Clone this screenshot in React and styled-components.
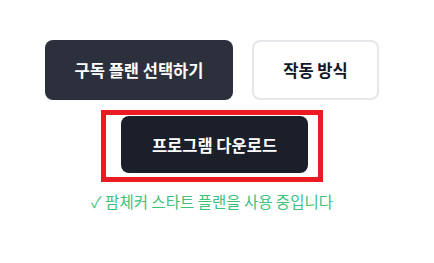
import React from "react";
import styled, { createGlobalStyle } from "styled-components";

const GlobalStyle = createGlobalStyle`
    body {
        margin: 0;
        background: #fff;
        font-family: "Noto Sans CJK KR", "Noto Sans", sans-serif;
    }
`;

function App() {
    return (
        <>
            <GlobalStyle />
            <Page>
                <Row>
                    <PrimaryButton>구독 플랜 선택하기</PrimaryButton>
                    <OutlineButton>작동 방식</OutlineButton>
                </Row>
                <Highlight>
                    <DownloadButton>프로그램 다운로드</DownloadButton>
                </Highlight>
                <Status>✓ 팜체커 스타트 플랜을 사용 중입니다</Status>
            </Page>
        </>
    );
}

const Page = styled.div`
    width: 424px;
    padding-top: 40px;
    display: flex;
    flex-direction: column;
    align-items: center;
`;
const Row = styled.div`
    display: flex;
    gap: 19px;
`;
const Button = styled.button`
    height: 60px;
    border-radius: 8px;
    font-family: inherit;
    font-size: 16.5px;
    font-weight: 700;
    cursor: pointer;
    display: flex;
    align-items: center;
    justify-content: center;
    box-sizing: border-box;
    padding: 0;
`;
const PrimaryButton = styled(Button)`
    width: 188px;
    background: #2b303c;
    color: #fff;
    border: none;
`;
const OutlineButton = styled(Button)`
    width: 127px;
    background: #fff;
    color: #111827;
    border: 2px solid #e5e7eb;
`;
const Highlight = styled.div`
    margin-top: 10px;
    border: 5px solid #ed1c24;
    padding: 1px 10px 4px 15px;
`;
const DownloadButton = styled(Button)`
    width: 187px;
    height: 57px;
    background: #1b1f2a;
    color: #fff;
    border: none;
`;
const Status = styled.p`
    margin: 8px 0 0;
    font-size: 15.5px;
    line-height: 22px;
    color: #3ec27a;
`;

export default App;
